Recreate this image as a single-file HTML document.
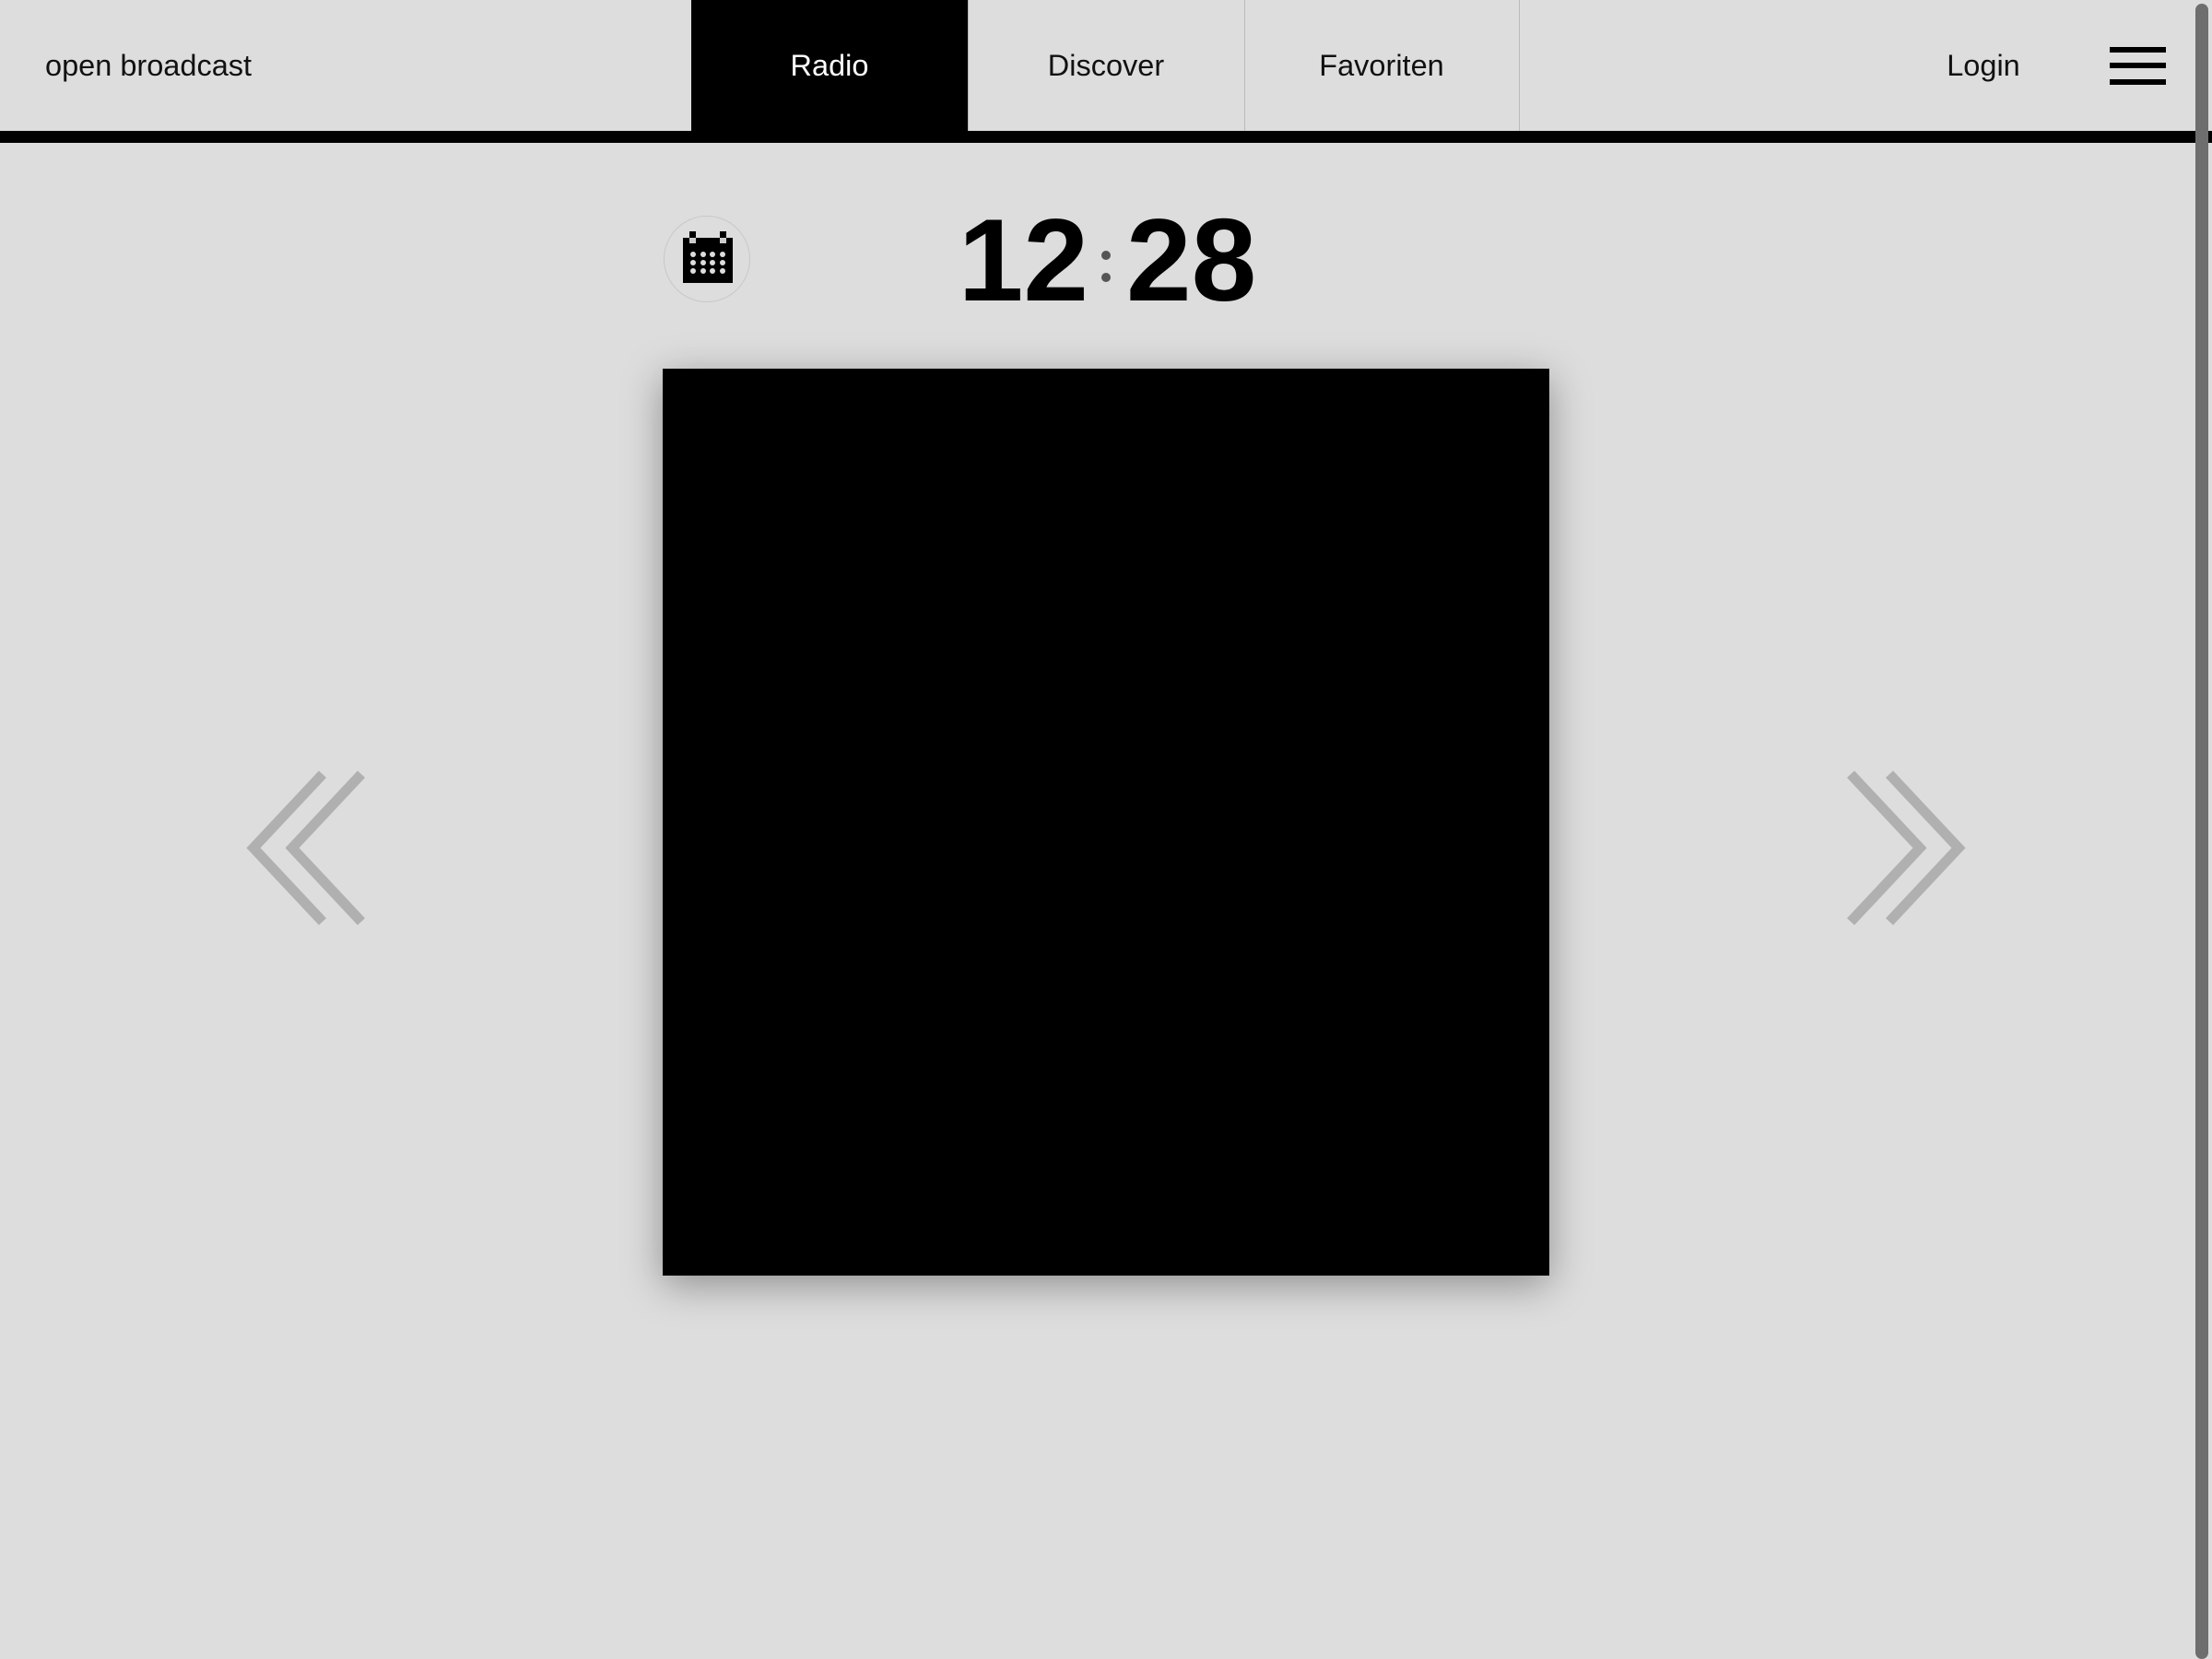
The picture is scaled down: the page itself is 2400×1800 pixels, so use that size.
<!DOCTYPE html>
<html><head><meta charset="utf-8"><style>
html,body{margin:0;padding:0;width:2400px;height:1800px;overflow:hidden;background:#dddddd;font-family:"Liberation Sans",sans-serif;}
.a{position:absolute;}
.bar{left:0;top:142px;width:2400px;height:13px;background:#000;}
.nav{font-size:32.5px;line-height:142px;top:0;height:142px;text-align:center;color:#111;}
.div{top:0;width:1px;height:142px;background:#bbb;}
.sb{left:2382px;top:4px;width:14px;height:1796px;background:#6e6e6e;border-radius:7px;}
.clk{font-weight:bold;font-size:127px;line-height:1;color:#000;}
.dot{width:10px;height:10px;border-radius:50%;background:#555;}
</style></head><body>
<div class="a nav" style="left:49px;text-align:left;">open broadcast</div>
<div class="a nav" style="left:750px;width:300px;background:#000;color:#fff;">Radio</div>
<div class="a div" style="left:1050px"></div>
<div class="a nav" style="left:1050px;width:300px;">Discover</div>
<div class="a div" style="left:1350px"></div>
<div class="a nav" style="left:1350px;width:298px;">Favoriten</div>
<div class="a div" style="left:1648px"></div>
<div class="a nav" style="left:2052px;width:200px;">Login</div>
<div class="a" style="left:2289px;top:51px;width:61px;height:6px;background:#000"></div>
<div class="a" style="left:2289px;top:68px;width:61px;height:6px;background:#000"></div>
<div class="a" style="left:2289px;top:86px;width:61px;height:6px;background:#000"></div>
<div class="a bar"></div>
<div class="a sb"></div>

<div class="a" style="left:720px;top:234px;width:94px;height:94px;border:1.5px solid #c8c8c8;border-radius:50%;box-sizing:border-box;"></div>
<svg class="a" style="left:740px;top:250px" width="56" height="58" viewBox="0 0 56 58">
<rect x="1" y="8" width="54" height="49" fill="#000"/>
<rect x="8" y="1" width="7" height="12" fill="#000"/><rect x="41" y="1" width="7" height="12" fill="#000"/>
<rect x="8" y="8" width="7" height="6" fill="#ccc"/><rect x="41" y="8" width="7" height="6" fill="#ccc"/>
<g fill="#ddd">
<circle cx="12" cy="26" r="3"/><circle cx="23" cy="26" r="3"/><circle cx="33" cy="26" r="3"/><circle cx="44" cy="26" r="3"/>
<circle cx="12" cy="35" r="3"/><circle cx="23" cy="35" r="3"/><circle cx="33" cy="35" r="3"/><circle cx="44" cy="35" r="3"/>
<circle cx="12" cy="44" r="3"/><circle cx="23" cy="44" r="3"/><circle cx="33" cy="44" r="3"/><circle cx="44" cy="44" r="3"/>
</g></svg>

<div class="a clk" style="right:1219px;top:219px;">12</div>
<div class="a clk" style="left:1222px;top:219px;">28</div>
<div class="a dot" style="left:1195px;top:272px"></div>
<div class="a dot" style="left:1195px;top:296px"></div>

<div class="a" style="left:719px;top:400px;width:962px;height:984px;background:#000;box-shadow:0 10px 40px rgba(0,0,0,0.35);"></div>

<svg class="a" style="left:0;top:0" width="2400" height="1800">
<g fill="none" stroke="#b0b0b0" stroke-width="11" stroke-linecap="butt" stroke-linejoin="miter">
<polyline points="350,840 275,920 350,1000"/>
<polyline points="392,840 317,920 392,1000"/>
<polyline points="2050,840 2125,920 2050,1000"/>
<polyline points="2008,840 2083,920 2008,1000"/>
</g></svg>
</body></html>
